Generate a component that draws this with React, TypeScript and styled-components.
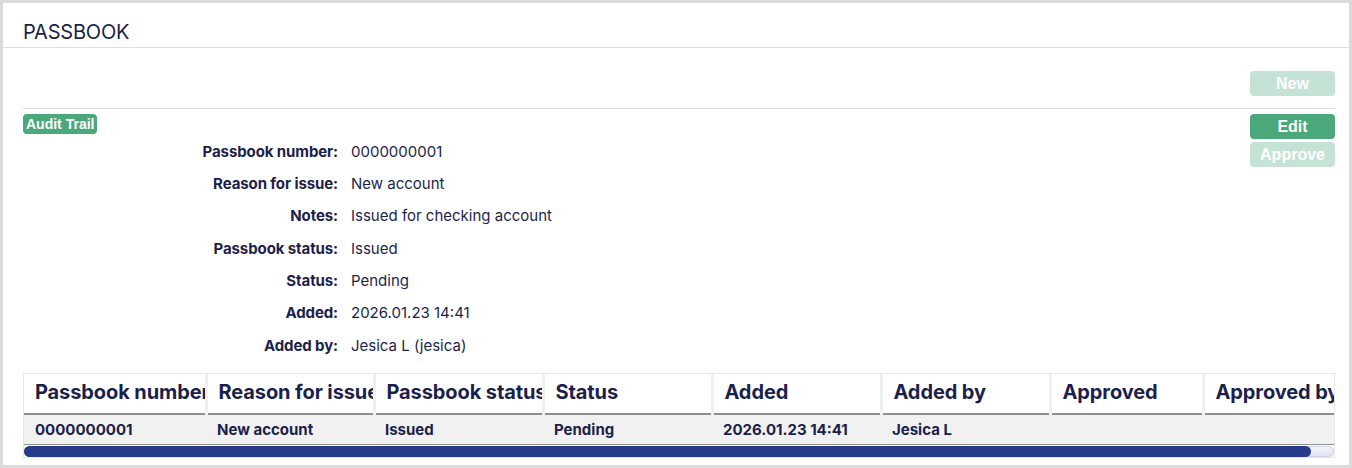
import React from "react";
import styled, { createGlobalStyle } from "styled-components";

const Global = createGlobalStyle`
  html, body { margin: 0; padding: 0; background: #dadada; }
  body { font-family: Inter, "Noto Sans", sans-serif; color: #1c1f4b; }
  * { box-sizing: border-box; }
`;

const Panel = styled.div`
  width: 1352px;
  height: 468px;
  border: 3px solid #dadada;
  background: #fff;
  display: flex;
  flex-direction: column;
`;

const Header = styled.div`
  height: 45px;
  border-bottom: 1px solid #e0e0e0;
  padding: 14px 0 0 20px;
  display: flex;
  align-items: center;
`;

const Title = styled.h1`
  margin: 0;
  font-family: Inter, sans-serif;
  font-weight: 400;
  font-size: 20px;
  color: #1c1f4b;
  letter-spacing: -0.2px;
`;

const Body = styled.div`
  padding: 23px 14px 0 20px;
  display: flex;
  flex-direction: column;
`;

const Toolbar = styled.div`
  display: flex;
  justify-content: flex-end;
  padding-bottom: 12px;
  border-bottom: 1px solid #dedede;
`;

const Button = styled.button<{ $disabled?: boolean }>`
  width: 85px;
  height: 25px;
  border: none;
  border-radius: 4px;
  padding: 0;
  font-family: "Liberation Sans", Arial, sans-serif;
  font-weight: 700;
  font-size: 16px;
  color: #fff;
  background: ${(p) => (p.$disabled ? "#c5e3d4" : "#4ba87a")};
  cursor: ${(p) => (p.$disabled ? "default" : "pointer")};
`;

const Section = styled.div`
  display: flex;
  padding-top: 5px;
`;

const Main = styled.div`
  flex: 1;
  display: flex;
  flex-direction: column;
  align-items: flex-start;
`;

const Badge = styled.span`
  display: inline-block;
  height: 20px;
  line-height: 20px;
  padding: 0 3px;
  border-radius: 4px;
  background: #4ba87a;
  color: #fff;
  font-family: "Liberation Sans", Arial, sans-serif;
  font-weight: 700;
  font-size: 14px;
`;

const Actions = styled.div`
  display: flex;
  flex-direction: column;
  gap: 3px;
`;

const Details = styled.dl`
  margin: 0;
  display: grid;
  grid-template-columns: 315px auto;
  column-gap: 13px;
  grid-auto-rows: 32.33px;
  align-items: center;
  font-size: 15px;
  padding-top: 1px;
`;

const Label = styled.dt`
  text-align: right;
  font-weight: 700;
  color: #1c1f4b;
  letter-spacing: -0.1px;
`;

const Value = styled.dd`
  margin: 0;
  font-weight: 400;
  color: #1c1f4b;
`;

const TableWrap = styled.div`
  margin-top: 12px;
  border: 1px solid #e6e6e6;
  display: flex;
  flex-direction: column;
`;

const TableViewport = styled.div`
  overflow: hidden;
`;

const Table = styled.table`
  width: 1333px;
  table-layout: fixed;
  border-collapse: collapse;
`;

const Th = styled.th<{ $last?: boolean }>`
  height: 40px;
  padding: 0 0 3px 11px;
  text-align: left;
  font-size: 20px;
  font-weight: 700;
  color: #1c1f4b;
  white-space: nowrap;
  overflow: hidden;
  text-overflow: clip;
  letter-spacing: -0.1px;
  border-right: ${(p) => (p.$last ? "none" : "3px solid #f0f0f0")};
  border-bottom: 2px solid #8e8e8e;
`;

const Td = styled.td`
  height: 30px;
  padding: 0 0 0 11px;
  background: #f1f1f1;
  font-size: 15px;
  font-weight: 700;
  color: #1c1f4b;
  white-space: nowrap;
  overflow: hidden;
  border-bottom: 1px solid #8e8e8e;
`;

const ScrollTrack = styled.div`
  height: 11px;
  border: 1px solid #c9cde6;
  border-radius: 6px;
  background: linear-gradient(#f4f5fb, #dfe2f0);
  display: flex;
  margin: 1px 0 0;
`;

const ScrollThumb = styled.div`
  height: 11px;
  margin: -1px 0 0 -1px;
  border-radius: 6px;
  background: #273b89;
`;

const details: [string, string][] = [
  ["Passbook number:", "0000000001"],
  ["Reason for issue:", "New account"],
  ["Notes:", "Issued for checking account"],
  ["Passbook status:", "Issued"],
  ["Status:", "Pending"],
  ["Added:", "2026.01.23 14:41"],
  ["Added by:", "Jesica L (jesica)"],
];

const columns = [
  { title: "Passbook number", width: 182 },
  { title: "Reason for issue", width: 168 },
  { title: "Passbook status", width: 169 },
  { title: "Status", width: 169 },
  { title: "Added", width: 169 },
  { title: "Added by", width: 169 },
  { title: "Approved", width: 153 },
  { title: "Approved by", width: 154 },
];

const row = ["0000000001", "New account", "Issued", "Pending", "2026.01.23 14:41", "Jesica L", "", ""];

const VIEWPORT = 1312;
const TOTAL = columns.reduce((s, c) => s + c.width, 0);

export default function App() {
  const thumbPct = (VIEWPORT / TOTAL) * 100;
  return (
    <>
      <Global />
      <Panel>
        <Header>
          <Title>PASSBOOK</Title>
        </Header>
        <Body>
          <Toolbar>
            <Button $disabled>New</Button>
          </Toolbar>
          <Section>
            <Main>
              <Badge>Audit Trail</Badge>
              <Details>
                {details.map(([l, v]) => (
                  <React.Fragment key={l}>
                    <Label>{l}</Label>
                    <Value>{v}</Value>
                  </React.Fragment>
                ))}
              </Details>
            </Main>
            <Actions>
              <Button>Edit</Button>
              <Button $disabled>Approve</Button>
            </Actions>
          </Section>
          <TableWrap>
            <TableViewport>
              <Table>
                <colgroup>
                  {columns.map((c) => (
                    <col key={c.title} style={{ width: c.width }} />
                  ))}
                </colgroup>
                <thead>
                  <tr>
                    {columns.map((c, i) => (
                      <Th key={c.title} $last={i === columns.length - 1}>
                        {c.title}
                      </Th>
                    ))}
                  </tr>
                </thead>
                <tbody>
                  <tr>
                    {row.map((v, i) => (
                      <Td key={i}>{v}</Td>
                    ))}
                  </tr>
                </tbody>
              </Table>
            </TableViewport>
            <ScrollTrack>
              <ScrollThumb style={{ width: `${thumbPct}%` }} />
            </ScrollTrack>
          </TableWrap>
        </Body>
      </Panel>
    </>
  );
}
